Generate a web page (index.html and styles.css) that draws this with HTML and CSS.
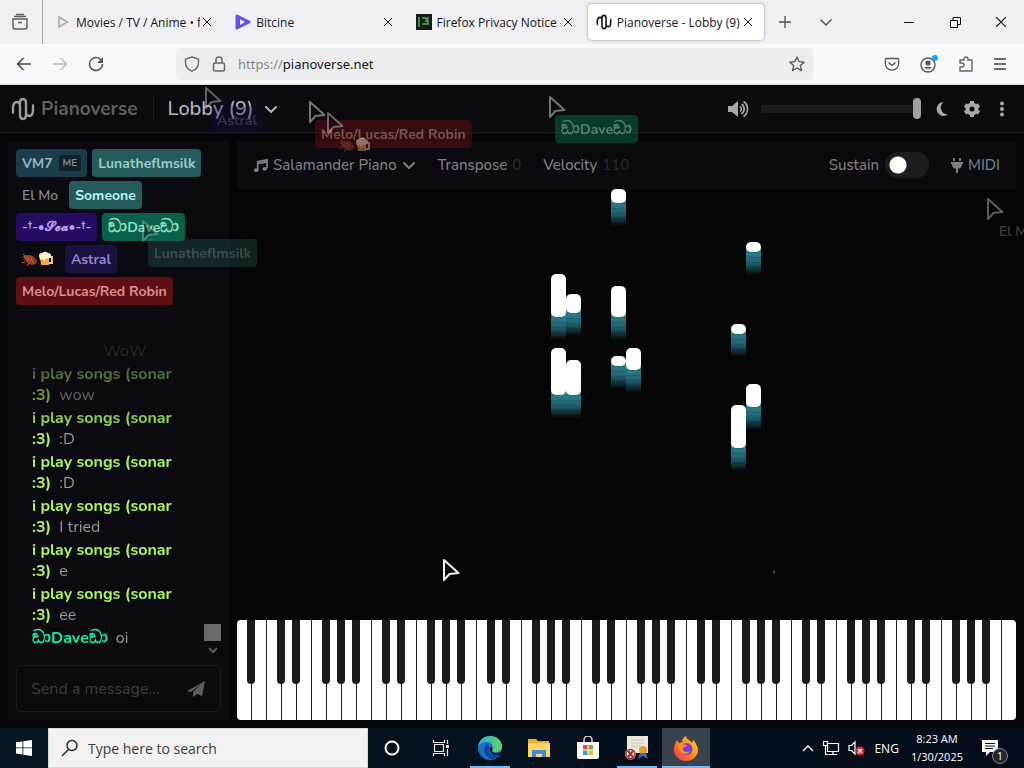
FILE: index.html
```html
<!DOCTYPE html>
<html lang="en">
<head>
<meta charset="utf-8">
<title>Pianoverse - Lobby (9)</title>
<link rel="stylesheet" href="styles.css">
</head>
<body>
<svg class="defs" aria-hidden="true">
  <symbol id="x" viewBox="0 0 10 10"><path d="M1 1l8 8M9 1l-8 8" fill="none" stroke="currentColor"/></symbol>
  <symbol id="logo" viewBox="0 0 24 24"><path d="M2 15.500V11C2 7 3.500 5 6 5s3 1.500 3 4v9c0 2.500 1 4 3 4s3-1.500 3-4V6c0-2.500-1-4-3-4S9 3.500 9 6M15 15c0 2.500.8 4 3.200 4S22 17 22 13V8.500" fill="none" stroke="currentColor" stroke-width="2.400" stroke-linecap="round"/></symbol>
  <symbol id="chev" viewBox="0 0 14 14"><path d="M2 5l5 5 5-5" fill="none" stroke="currentColor" stroke-width="2" stroke-linecap="round" stroke-linejoin="round"/></symbol>
  <symbol id="cursor" viewBox="0 0 18 24"><path d="M2 2v20l5.500-6 9-1z" fill="#08080c" stroke="currentColor" stroke-width="2" stroke-linejoin="round"/></symbol>
  <symbol id="pets" viewBox="0 0 32 16"><path d="M1 5l5-1 5 1 4 4-1 4-5 1-6-4z" fill="#8c3b27"/><path d="M2 5l4 4M5 4l3 7m0-7l3 8m-8-1-3 1m7 0-2 3M1 3l3 2" fill="none" stroke="#c65b3a"/><path d="M18 5h9v9h-8z" fill="#f0a83a"/><path d="M26 6h4v6h-4" fill="none" stroke="#e6c383" stroke-width="2"/><path d="M17 5a3 3 0 0 1 3-3 4 4 0 0 1 6 0 3 3 0 0 1 3 4l-3 2-2-1-1 3-3-2-2 1z" fill="#fff2cc"/></symbol>
</svg>

<div class="tabs">
  <button class="recent" aria-label="Firefox View"><svg width="18" height="18" viewBox="0 0 18 18"><path d="M2 6h14v8a2 2 0 0 1-2 2H4a2 2 0 0 1-2-2zM3 3.500h12M5 1.500h8M7 9.500h4" fill="none" stroke="currentColor" stroke-width="1.400"/></svg></button>
  <div class="tablist">
    <div class="tab"><svg width="16" height="14" viewBox="0 0 16 14"><path d="M4 2l8.500 5L4 12z" fill="none" stroke="#aaaab0" stroke-width="1.500"/></svg><span class="tab-title">Movies / TV / Anime • f</span><button class="close" aria-label="Close tab"><svg width="10" height="10"><use href="#x"/></svg></button></div>
    <div class="tab"><svg width="16" height="16" viewBox="0 0 16 16"><path d="M2 2l12 6L2 14z" fill="#5f4ae0" stroke="#6a50ea" stroke-width="3" stroke-linejoin="round"/><path d="M5 5l5 3-5 3z" fill="#efeaff"/></svg><span class="tab-title">Bitcine</span><button class="close" aria-label="Close tab"><svg width="10" height="10"><use href="#x"/></svg></button></div>
    <div class="tab"><svg width="16" height="16" viewBox="0 0 16 16"><path d="M0 0h16v16H0z" fill="#151b18"/><path d="M3 3v10M6 4h6l-2 3h2v3H6" fill="none" stroke="#3cba45" stroke-width="1.500"/></svg><span class="tab-title">Firefox Privacy Notice –</span><button class="close" aria-label="Close tab"><svg width="10" height="10"><use href="#x"/></svg></button></div>
    <div class="tab active"><svg width="16" height="16"><use href="#logo"/></svg><span class="tab-title">Pianoverse - Lobby (9)</span><button class="close" aria-label="Close tab"><svg width="10" height="10"><use href="#x"/></svg></button></div>
  </div>
  <button class="strip-btn" aria-label="New tab"><svg width="14" height="14" viewBox="0 0 14 14"><path d="M7 1v12M1 7h12" fill="none" stroke="currentColor" stroke-width="1.300"/></svg></button>
  <button class="strip-btn" aria-label="List all tabs"><svg width="14" height="14" viewBox="0 0 14 14"><path d="M1.500 4.500L7 10l5.500-5.500" fill="none" stroke="currentColor" stroke-width="1.400"/></svg></button>
  <div class="window-btns">
    <button aria-label="Minimize"><svg width="10" height="10"><path d="M0 5.500h10" stroke="#111"/></svg></button>
    <button aria-label="Restore"><svg width="11" height="11" viewBox="0 0 11 11"><path d="M.5 3.500h7v7h-7zM3 3V.5h7.500v7H8" fill="none" stroke="#111"/></svg></button>
    <button aria-label="Close"><svg width="12" height="12"><use href="#x"/></svg></button>
  </div>
</div>

<div class="navbar">
  <div class="nav-left">
    <button aria-label="Back"><svg width="16" height="16" viewBox="0 0 16 16"><path d="M15 8H2m5.500-6L1.500 8l6 6" fill="none" stroke="#444449" stroke-width="1.500"/></svg></button>
    <button aria-label="Forward"><svg width="16" height="16" viewBox="0 0 16 16"><path d="M1 8h13M8.500 2l6 6-6 6" fill="none" stroke="#bcbcc0" stroke-width="1.500"/></svg></button>
    <button aria-label="Reload"><svg width="16" height="16" viewBox="0 0 16 16"><path d="M14 5.500A6.500 6.500 0 1 0 14.500 8" fill="none" stroke="#55555a" stroke-width="1.500"/><path d="M15 1v6H9z" fill="#55555a"/></svg></button>
  </div>
  <div class="urlbar">
    <svg width="16" height="16" viewBox="0 0 16 16"><path d="M8 1l6.500 2.200v3.300c0 4-2.500 7.200-6.500 8.700C4 13.700 1.500 10.500 1.500 6.500V3.200z" fill="none" stroke="#66666b" stroke-width="1.400" stroke-linejoin="round"/></svg>
    <svg width="14" height="16" viewBox="0 0 14 16"><rect x="1.500" y="7" width="11" height="8" rx="1.500" fill="none" stroke="#66666b" stroke-width="1.500"/><path d="M4 7V4a3 3 0 0 1 6 0v3" fill="none" stroke="#66666b" stroke-width="1.500"/></svg>
    <p class="url">https://<b>pianoverse.net</b></p>
    <button aria-label="Bookmark"><svg width="16" height="16" viewBox="0 0 16 16"><path d="M8 1l2.100 4.700 5.100.5-3.900 3.400 1.200 5L8 12l-4.500 2.600 1.200-5L.8 6.200l5.100-.5z" fill="none" stroke="#55555a" stroke-width="1.300" stroke-linejoin="round"/></svg></button>
  </div>
  <div class="nav-right">
    <button aria-label="Save to Pocket"><svg width="16" height="16" viewBox="0 0 16 16"><path d="M2.500 2.500h11A1.200 1.200 0 0 1 14.700 4v3.500a6.700 6.700 0 0 1-13.400 0V4a1.200 1.200 0 0 1 1.200-1.500zM4.500 6.500L8 9.500l3.500-3" fill="none" stroke="#55555a" stroke-width="1.300"/></svg></button>
    <button aria-label="Account"><svg width="20" height="20" viewBox="0 0 20 20"><circle cx="9" cy="11" r="7" fill="none" stroke="#55555a" stroke-width="1.400"/><circle cx="9" cy="9" r="2.600" fill="#55555a"/><path d="M5 13h8a5 5 0 0 1-8 0z" fill="#55555a"/><circle cx="16" cy="4" r="3" fill="#1da7ee"/></svg></button>
    <button aria-label="Extensions"><svg width="16" height="16" viewBox="0 0 16 16"><path d="M2 15V11h2a2 2 0 0 0 0-4H2V4h4V3a2 2 0 0 1 4 0v1h4v11z" fill="none" stroke="#66666b" stroke-width="1.400"/></svg></button>
    <button aria-label="Menu"><svg width="14" height="14" viewBox="0 0 14 14"><path d="M1 2h12M1 7h12M1 12h12" stroke="#44444a" stroke-width="1.300"/></svg></button>
  </div>
</div>

<div class="app">
  <header class="app-head">
    <a class="brand" href="#"><svg width="24" height="24"><use href="#logo"/></svg>Pianoverse</a>
    <button class="room">Lobby (9)<svg width="14" height="14"><use href="#chev"/></svg></button>
    <div class="head-tools">
      <svg width="22" height="18" viewBox="0 0 22 18"><path d="M1 6h4l6-5v16l-6-5H1z" fill="currentColor"/><path d="M13 6.500a3 3 0 0 1 0 5M14.500 4a6 6 0 0 1 0 10M16.500 1.500a9 9 0 0 1 0 15" fill="none" stroke="currentColor" stroke-width="1.700"/></svg>
      <input class="volume" type="range" min="0" max="100" value="100" aria-label="Volume">
      <button aria-label="Dark mode"><svg width="16" height="18" viewBox="0 0 16 18"><path d="M9.500 2a7 7 0 1 0 4.500 12.500A7 7 0 0 1 9.500 2z" fill="currentColor"/></svg></button>
      <button aria-label="Settings"><svg width="18" height="18" viewBox="0 0 18 18"><circle cx="9" cy="9" r="4.500" fill="none" stroke="currentColor" stroke-width="4"/><path d="M9 1v3M9 14v3M2 5l3 2M13 11l3 2M2 13l3-2M13 7l3-2" stroke="currentColor" stroke-width="4"/></svg></button>
      <button aria-label="More"><svg width="6" height="16" viewBox="0 0 6 16"><g fill="currentColor"><circle cx="3" cy="2.500" r="2"/><circle cx="3" cy="8" r="2"/><circle cx="3" cy="13.500" r="2"/></g></svg></button>
    </div>
  </header>

  <div class="workspace">
    <aside class="side">
      <div class="people">
        <span class="chip teal-dim">VM7 <small>ME</small></span><span class="chip teal">Lunatheflmsilk</span>
        <span class="chip plain">El Mo</span><span class="chip teal bright">Someone</span>
        <span class="chip violet">-†-•𝓢𝓮𝓪•-†-</span><span class="chip green"><span><span class="sinhala">ඞා</span>Dave<span class="sinhala">ඞා</span></span></span>
        <span class="chip plain"><svg width="32" height="16"><use href="#pets"/></svg></span><span class="chip indigo">Astral</span>
        <span class="chip red">Melo/Lucas/Red Robin</span>
      </div>
      <div class="chat">
        <div class="log">
          <p class="system">WoW</p>
          <p><b>i play songs (sonar :3)</b>wow</p>
          <p><b>i play songs (sonar :3)</b>:D</p>
          <p><b>i play songs (sonar :3)</b>:D</p>
          <p><b>i play songs (sonar :3)</b>I tried</p>
          <p><b>i play songs (sonar :3)</b>e</p>
          <p><b>i play songs (sonar :3)</b>ee</p>
          <p><b class="dave"><span class="sinhala">ඞා</span>Dave<span class="sinhala">ඞා</span></b>oi</p>
        </div>
        <div class="scroll"><i class="thumb"></i><svg width="12" height="10" viewBox="0 0 12 10"><path d="M2 3l4 4 4-4" fill="none" stroke="#5a5a5e" stroke-width="2"/></svg></div>
      </div>
      <form class="composer">
        <input type="text" placeholder="Send a message..." aria-label="Send a message">
        <button type="button" aria-label="Send"><svg width="20" height="18" viewBox="0 0 20 18"><path d="M1 11L19 1l-3 15-5-2-4 3v-5l8-8L5 12z" fill="currentColor"/></svg></button>
      </form>
    </aside>

    <main class="stage">
      <div class="toolbar">
        <button class="sound"><svg width="15" height="15" viewBox="0 0 16 16"><path d="M5 13V4l10-2v9" fill="none" stroke="currentColor" stroke-width="1.800"/><path d="M5 6l10-2" stroke="currentColor" stroke-width="2"/><ellipse cx="3.500" cy="13" rx="2.500" ry="2" fill="currentColor"/><ellipse cx="12.500" cy="11.500" rx="2.500" ry="2" fill="currentColor"/></svg>Salamander Piano<svg width="14" height="14"><use href="#chev"/></svg></button>
        <button>Transpose <em>0</em></button>
        <button>Velocity <em>110</em></button>
        <label class="sustain">Sustain <input type="checkbox" class="switch"></label>
        <button class="midi"><svg width="12" height="16" viewBox="0 0 12 16"><path d="M3 1v3M9 1v3" stroke="currentColor" stroke-width="2"/><path d="M0 5h12v2h-1a5 5 0 0 1-4 5v4H5v-4a5 5 0 0 1-4-5H0z" fill="currentColor"/></svg>MIDI</button>
      </div>
      <div class="roll">
        <i class="note n1"></i><i class="note n2"></i><i class="note n3"></i><i class="note n4"></i><i class="note n5"></i><i class="note n6"></i>
        <i class="note n7"></i><i class="note n8"></i><i class="note n9"></i><i class="note n10"></i><i class="note n11"></i><i class="note n12"></i>
        <i class="speck"></i>
      </div>
      <div class="keys">
        <button class="key" title="A0"></button><button class="key" title="B0"></button>
        <button class="key" title="C1"></button><button class="key" title="D1"></button><button class="key" title="E1"></button><button class="key" title="F1"></button><button class="key" title="G1"></button><button class="key" title="A1"></button><button class="key" title="B1"></button>
        <button class="key" title="C2"></button><button class="key" title="D2"></button><button class="key" title="E2"></button><button class="key" title="F2"></button><button class="key" title="G2"></button><button class="key" title="A2"></button><button class="key" title="B2"></button>
        <button class="key" title="C3"></button><button class="key" title="D3"></button><button class="key" title="E3"></button><button class="key" title="F3"></button><button class="key" title="G3"></button><button class="key" title="A3"></button><button class="key" title="B3"></button>
        <button class="key" title="C4"></button><button class="key" title="D4"></button><button class="key" title="E4"></button><button class="key" title="F4"></button><button class="key" title="G4"></button><button class="key" title="A4"></button><button class="key" title="B4"></button>
        <button class="key" title="C5"></button><button class="key" title="D5"></button><button class="key" title="E5"></button><button class="key" title="F5"></button><button class="key" title="G5"></button><button class="key" title="A5"></button><button class="key" title="B5"></button>
        <button class="key" title="C6"></button><button class="key" title="D6"></button><button class="key" title="E6"></button><button class="key" title="F6"></button><button class="key" title="G6"></button><button class="key" title="A6"></button><button class="key" title="B6"></button>
        <button class="key" title="C7"></button><button class="key" title="D7"></button><button class="key" title="E7"></button><button class="key" title="F7"></button><button class="key" title="G7"></button><button class="key" title="A7"></button><button class="key" title="B7"></button>
        <button class="key" title="C8"></button>
      </div>
    </main>
  </div>

  <div class="cursors">
    <div class="peer p-astral"><svg width="18" height="24"><use href="#cursor"/></svg><span class="chip indigo">Astral</span></div>
    <div class="peer p-melo"><svg width="18" height="24"><use href="#cursor"/></svg><span class="chip red">Melo/Lucas/Red Robin</span></div>
    <div class="peer p-pets"><svg width="18" height="24"><use href="#cursor"/></svg><span class="chip plain"><svg width="32" height="16"><use href="#pets"/></svg></span></div>
    <div class="peer p-dave"><svg width="18" height="24"><use href="#cursor"/></svg><span class="chip green"><span><span class="sinhala">ඞා</span>Dave<span class="sinhala">ඞා</span></span></span></div>
    <div class="peer p-luna"><svg width="18" height="24"><use href="#cursor"/></svg><span class="chip teal">Lunatheflmsilk</span></div>
    <div class="peer p-elmo"><svg width="18" height="24"><use href="#cursor"/></svg><span class="chip plain">El Mo</span></div>
    <div class="peer p-own"><svg width="18" height="24"><use href="#cursor"/></svg></div>
  </div>
</div>

<footer class="taskbar">
  <button class="start" aria-label="Start"><svg width="16" height="16" viewBox="0 0 16 16"><path d="M0 2.300L6.500 1.400v6.100H0zM7.300 1.300L16 0v7.500H7.300zM0 8.300h6.500v6.200L0 13.600zM7.300 8.300H16V16l-8.700-1.300z" fill="#fff"/></svg></button>
  <label class="search"><svg width="18" height="18" viewBox="0 0 18 18"><circle cx="11" cy="6.500" r="5" fill="none" stroke="#222" stroke-width="1.400"/><path d="M7.500 10.500L1 17" stroke="#222" stroke-width="1.400"/></svg><input type="text" placeholder="Type here to search" aria-label="Type here to search"></label>
  <div class="apps">
    <button aria-label="Cortana"><svg width="18" height="18"><circle cx="9" cy="9" r="6.500" fill="none" stroke="#fff" stroke-width="2"/></svg></button>
    <button aria-label="Task View"><svg width="18" height="18" viewBox="0 0 18 18"><path d="M2.500 5.500h9v7h-9zM1.500 1v2.500h11V1M1.500 17v-2.500h11V17M15.500 1v4m0 5v7" fill="none" stroke="#e8e8e8" stroke-width="1.200"/><path d="M14 6h3v3h-3z" fill="#e8e8e8"/></svg></button>
    <button class="open" aria-label="Edge"><svg width="26" height="26" viewBox="0 0 26 26"><defs><linearGradient id="eg" x1="0" y1="0" x2="1" y2="0"><stop offset="0" stop-color="#2aa9e4"/><stop offset="1" stop-color="#62d85a"/></linearGradient></defs><circle cx="13" cy="13" r="12" fill="#1670c9"/><path d="M1 12C2 4 8 1 13 1c8 0 12 6 12 10 0 5-4 6-6 6-3 0-5-1-4-3 2-4-1-7-5-7-5 0-8 3-9 5z" fill="url(#eg)"/><path d="M10 9c-5 4-3 13 5 15 4 0 7-2 9-5-7 3-14 0-11-7z" fill="#0d4597"/><path d="M15 12c2 3-2 4 2 6 3 1 6 0 8-2l2 4-3-1c-7 3-12-1-11-6z" fill="#04121f"/></svg></button>
    <button aria-label="File Explorer"><svg width="24" height="22" viewBox="0 0 24 22"><path d="M1 2h8l2 2h11v16H1z" fill="#e9ae2f"/><path d="M1 6h22v14H1z" fill="#fbd866"/><path d="M5 20v-7h14v7h-4v-3H9v3z" fill="#3f8fd2"/></svg></button>
    <button aria-label="Microsoft Store"><svg width="24" height="24" viewBox="0 0 24 24"><path d="M8 7V4a4 4 0 0 1 8 0v3" fill="none" stroke="#ddd" stroke-width="1.500"/><path d="M1 6h22v15a2 2 0 0 1-2 2H3a2 2 0 0 1-2-2z" fill="#fff"/><path d="M7 9h4.500v4.500H7z" fill="#e8502a"/><path d="M12.500 9H17v4.500h-4.500z" fill="#74b52b"/><path d="M7 14.500h4.500V19H7z" fill="#27a2e3"/><path d="M12.500 14.500H17V19h-4.500z" fill="#f5b81c"/></svg></button>
    <button class="open" aria-label="Certificate tool"><svg width="26" height="26" viewBox="0 0 26 26"><path d="M3 1h21v17H3z" fill="#ece9dc"/><path d="M7 5h13M7 8h13M7 11h9" stroke="#c8c5b8"/><circle cx="19" cy="15" r="4" fill="#dda127"/><path d="M16 18l-2 6 5-3 5 3-2-6z" fill="#3e67b5"/><circle cx="6.500" cy="19" r="5.500" fill="#f1e8e6"/><circle cx="6.500" cy="19" r="4.500" fill="none" stroke="#9b2f32" stroke-width="1.500"/><path d="M4 16l5 6M9 16l-5 6" stroke="#9b2f32" stroke-width="2"/></svg></button>
    <button class="open current" aria-label="Firefox"><svg width="26" height="26" viewBox="0 0 26 26"><defs><linearGradient id="fx" x1="1" y1="0" x2="0" y2="1"><stop offset="0" stop-color="#ffe226"/><stop offset=".5" stop-color="#ff8a1e"/><stop offset="1" stop-color="#f0245e"/></linearGradient></defs><path d="M4 5l2 3 3-1c0-3 2-5 4-6 0 3 4 4 6 7l1-3c4 4 5 8 5 10a12 11 0 0 1-24 0c0-4 1-7 3-10z" fill="url(#fx)"/><circle cx="13.500" cy="14" r="6" fill="#7b3ddd"/><path d="M5 10c3-2 5 0 9 0-1 3-4 1-4 4s4 4 7 2c-2 5-12 4-12-6z" fill="#ff8c20"/></svg></button>
  </div>
  <div class="tray">
    <svg width="12" height="12" viewBox="0 0 12 12"><path d="M1 9l5-5 5 5" fill="none" stroke="#fff" stroke-width="1.400"/></svg>
    <svg width="18" height="16" viewBox="0 0 18 16"><path d="M5.500 3.500h11v8h-11zM11 12v3m-4-.5h8M1.500 1.500h4v4h-4zM3.500 6v8.500h3" fill="none" stroke="#fff" stroke-width="1.200"/></svg>
    <svg width="18" height="16" viewBox="0 0 18 16"><path d="M1 5.500h2.500L7 2v12l-3.500-3.500H1z" fill="none" stroke="#fff" stroke-width="1.200"/><circle cx="12" cy="11" r="4.500" fill="#d8263a"/><path d="M10 9l4 4M14 9l-4 4" stroke="#fff" stroke-width="1.300"/></svg>
    <span class="lang">ENG</span>
    <div class="clock"><time>8:23 AM</time><time>1/30/2025</time></div>
    <button class="notices" aria-label="Notifications"><svg width="18" height="18" viewBox="0 0 18 18"><path d="M1 1h16v12H9l-4 4v-4H1z" fill="#fff"/><path d="M4 4.500h10M4 7h10M4 9.500h8" stroke="#07121c"/></svg><span class="count">1</span></button>
  </div>
</footer>
</body>
</html>
```
FILE: styles.css
```css
* { box-sizing: border-box; }

body {
  --chrome: "Segoe UI", "Open Sans", "Noto Sans", sans-serif;
  --app: "Nunito", "Noto Sans", sans-serif;
  margin: 0;
  min-height: 100vh;
  display: flex;
  flex-direction: column;
  overflow: hidden;
  background: #050507;
  font-family: var(--chrome);
}

button, input { font: inherit; color: inherit; }
button { display: flex; align-items: center; justify-content: center; padding: 0; border: 0; background: none; }
svg { display: block; flex: none; }
p { margin: 0; }
.defs { position: absolute; width: 0; height: 0; }

/* Browser tab strip */
.tabs { display: flex; align-items: center; height: 44px; background: #f0f0f4; color: #15141a; font-size: 12px; }
.recent { width: 43px; height: 44px; margin-right: 4px; padding-right: 3px; border-right: 1px solid #a9a9b0; color: #5b5b66; }
.tablist { display: flex; flex: 0 1 717px; gap: 4px; min-width: 0; }
.tab { display: flex; flex: 1 1 0; align-items: center; gap: 5px; min-width: 0; height: 36px; padding: 0 8px; border-radius: 4px; }
.tab.active { background: #fff; box-shadow: 0 0 3px #8a8a94; }
.tab-title { flex: 1; min-width: 0; margin-right: -3px; overflow: hidden; white-space: nowrap; }
.close { flex: none; width: 10px; height: 20px; margin-right: 3px; }
.strip-btn { width: 41px; height: 36px; color: #4a4a52; }
.window-btns { display: flex; margin-left: auto; }
.window-btns button { width: 46px; height: 44px; }

/* Browser toolbar */
.navbar { display: flex; align-items: center; height: 41px; border-bottom: 1px solid #ddd; background: #f9f9fb; }
.nav-left { display: flex; gap: 20px; flex: 0 0 176px; padding-left: 16px; }
.urlbar { display: flex; flex: 1; align-items: center; gap: 12px; height: 32px; padding: 0 8px; border-radius: 4px; background: #ededf0; font-family: "Segoe UI", "Noto Sans", sans-serif; font-size: 13px; }
.url { flex: 1; color: #85858c; }
.url b { color: #15141a; font-weight: 400; }
.nav-right { display: flex; align-items: center; justify-content: space-between; flex: 0 0 211px; padding: 0 17px 0 71px; }

/* Application frame */
.app { position: relative; display: flex; flex: 1; flex-direction: column; overflow: hidden; background: #040407; color: #8b8d94; font-family: var(--app); }
.app-head { display: flex; align-items: center; height: 48px; padding: 0 13px 0 11px; border-bottom: 1px solid #1d1d23; background: #0a0a0f; }
.brand { display: flex; align-items: center; gap: 6px; padding-right: 15px; border-right: 1px solid #1c1c22; color: #5c5f63; font-size: 19px; font-weight: 700; line-height: 20px; text-decoration: none; }
.brand svg { color: #9a9ea4; }
.room { gap: 10px; margin-left: 14px; color: #b4b5c2; font-size: 20px; font-weight: 500; }
.head-tools { display: flex; align-items: center; gap: 12px; margin-left: auto; color: #a2a9b0; }
.head-tools button { min-width: 18px; }
.volume { width: 160px; height: 22px; margin: 0; appearance: none; background: none; }
.volume::-webkit-slider-runnable-track { height: 8px; background: #1b1b20; }
.volume::-webkit-slider-thumb { appearance: none; width: 8px; height: 21px; margin-top: -7px; border-radius: 4px; background: #9aa1a8; }

.workspace { display: flex; flex: 1; gap: 7px; padding: 8px; min-height: 0; }

/* Sidebar */
.side { display: flex; flex: 0 0 222px; flex-direction: column; min-width: 0; padding: 8px 9px 8px 8px; background: #0a0a10; }
.people { display: flex; flex-wrap: wrap; gap: 4px 5px; }
.chip { display: inline-flex; align-items: center; gap: 6px; height: 28px; padding: 0 6px; border-radius: 4px; font-size: 14px; font-weight: 700; white-space: nowrap; }
.chip small { padding: 0 4px; border-radius: 3px; background: #132026; color: #7d8a90; font-size: 10px; line-height: 16px; }
.sinhala { font-size: 18px; line-height: 18px; }
.teal-dim { background: #1b3c4a; color: #93b8c6; }
.teal { background: #265b5b; color: #92cfc5; }
.teal.bright { color: #b6f7e9; }
.plain { color: #85868b; font-weight: 600; }
.violet { background: #230c62; color: #b79df0; font-size: 13px; }
.green { background: #08614a; color: #90dcc0; }
.indigo { background: #1c1040; color: #9884ce; }
.red { background: #5c0f14; color: #dc8d8d; }

.chat { display: flex; flex: 1; min-height: 0; margin-top: 12px; }
.log { flex: 1; display: flex; flex-direction: column; justify-content: flex-end; gap: 2px; min-width: 0; padding: 0 20px 16px 16px; overflow: hidden; color: #97989e; font-size: 16px; line-height: 21px; mask-image: linear-gradient(#0003 34px, #000 120px); }
.log p { flex: none; }
.log b { margin-right: 8px; color: #acf35a; font-weight: 700; }
.log .dave { color: #15eda5; }
.log .system { padding-left: 34px; text-align: center; }
.scroll { display: flex; flex: 0 0 17px; flex-direction: column; justify-content: flex-end; align-items: center; gap: 4px; padding-bottom: 10px; }
.thumb { width: 17px; height: 17px; background: #69696d; }
.composer { display: flex; align-items: center; height: 47px; padding: 0 14px; border: 1px solid #1b1b20; border-radius: 5px; color: #5b5b61; }
.composer input { flex: 1; min-width: 0; padding: 0; border: 0; outline: 0; background: none; font-size: 16px; }
.composer input::placeholder { color: #3d3d43; }

/* Piano */
.stage { display: flex; flex: 1; flex-direction: column; min-width: 0; }
.toolbar { display: flex; align-items: center; height: 48px; padding: 0 16px; background: #0a0a10; color: #7e7f85; font-size: 15px; font-weight: 500; }
.toolbar button { gap: 5px; margin-right: 22px; }
.toolbar em { color: #292a2f; font-style: normal; }
.sustain { display: flex; align-items: center; gap: 6px; margin-left: auto; }
.switch { appearance: none; width: 44px; height: 26px; margin: 0 22px 0 0; border-radius: 13px; background: radial-gradient(circle at 13px 13px, #fff 8px, #1c1c22 9px); }
.toolbar .midi { margin-right: 0; }

.roll { position: relative; z-index: 0; flex: 1; background: #050506; }
.note { position: absolute; width: 15px; border-radius: 5px; background: #fff; }
.note::after { content: ""; position: absolute; z-index: -1; top: calc(100% - 4px); left: 0; width: 15px; height: 27px; background: repeating-linear-gradient(#0000 0 4px, #0002 4px 5px), linear-gradient(#2f8b93, #205f6f 55%, #0a202900); }
.n1 { left: 374px; top: 0; height: 14px; }
.n2 { left: 509px; top: 53px; height: 10px; }
.n3 { left: 314px; top: 85px; height: 43px; }
.n4 { left: 329px; top: 105px; height: 19px; }
.n5 { left: 374px; top: 97px; height: 31px; }
.n6 { left: 494px; top: 135px; height: 10px; }
.n7 { left: 314px; top: 159px; height: 47px; }
.n8 { left: 329px; top: 171px; height: 35px; }
.n9 { left: 374px; top: 167px; height: 10px; }
.n10 { left: 389px; top: 159px; height: 22px; }
.n11 { left: 509px; top: 195px; height: 23px; }
.n12 { left: 494px; top: 216px; height: 43px; }
.speck { position: absolute; left: 536px; top: 382px; width: 2px; height: 2px; background: #55555a; }

.keys { display: flex; height: 100px; border-radius: 4px; overflow: hidden; background: #fff; }
.key { position: relative; flex: 1 1 0; min-width: 0; border-right: 1px solid #222; }
.key:last-child { border-right: 0; }
.key:nth-child(7n+1)::after, .key:nth-child(7n+3)::after, .key:nth-child(7n+4)::after, .key:nth-child(7n+6)::after, .key:nth-child(7n+7)::after {
  content: ""; position: absolute; z-index: 1; top: 0; right: -4px; width: 8px; height: 64px; border-radius: 0 0 4px 4px; background: #1b1b1b;
}
.key:last-child::after { display: none; }

/* Other players' pointers */
.cursors { position: absolute; inset: 0; overflow: hidden; pointer-events: none; }
.peer { position: absolute; color: #c9c9cf; opacity: .45; }
.peer .chip { position: absolute; top: 20px; left: 7px; }
.p-astral { left: 204px; top: 1px; }
.p-astral .chip { opacity: .7; }
.p-melo { left: 308px; top: 15px; opacity: .55; }
.p-pets { left: 326px; top: 26px; }
.p-dave { left: 548px; top: 10px; opacity: .55; }
.p-luna { left: 141px; top: 134px; opacity: .35; }
.p-elmo { left: 986px; top: 112px; }
.p-own { left: 442px; top: 473px; color: #f4f4f6; opacity: 1; }

/* Desktop taskbar */
.taskbar { display: flex; height: 40px; background: linear-gradient(90deg, #04161f, #06101c 60%, #050d1a); color: #fff; font-size: 12px; }
.start { width: 48px; }
.search { display: flex; align-items: center; gap: 9px; flex: 0 1 320px; padding-left: 12px; border: 1px solid #d8d8d8; background: #f2f2f2; }
.search input { flex: 1; min-width: 0; padding: 0; border: 0; outline: 0; background: none; color: #222; font-size: 14px; }
.search input::placeholder { color: #3c3c3c; }
.apps { display: flex; gap: 1px; }
.apps button { width: 48px; }
.apps .open { background: linear-gradient(#76b9ed, #76b9ed) bottom / 40px 2px no-repeat; }
.apps .current { background-color: #3a434d; background-size: 48px 2px; }
.tray { display: flex; align-items: center; gap: 8px; margin-left: auto; padding-right: 19px; }
.clock { display: flex; flex-direction: column; align-items: center; margin-left: 4px; font-size: 11px; line-height: 18px; }
.notices { position: relative; width: 30px; margin-left: 4px; }
.count { position: absolute; right: -3px; bottom: -7px; width: 16px; height: 16px; border: 1px solid #84888d; border-radius: 8px; background: #23272d; font-size: 11px; line-height: 14px; }
```
